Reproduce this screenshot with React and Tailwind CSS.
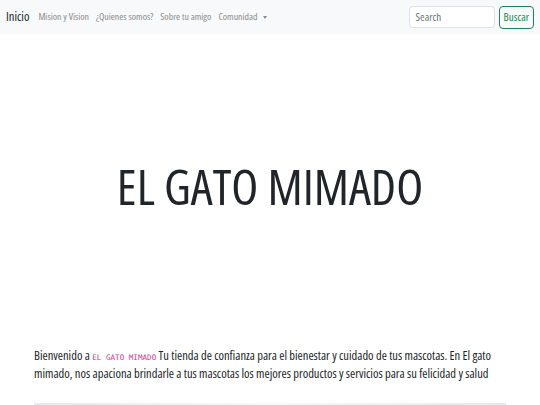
import React from 'react';

export default function App() {
  const links = ['Mision y Vision', '¿Quienes somos?', 'Sobre tu amigo'];

  return (
    <div className="min-h-[405px] bg-white text-[#212529] overflow-hidden font-stretch-condensed" style={{ fontFamily: '"Open Sans", "DejaVu Sans", sans-serif' }}>
      {/* Navbar */}
      <nav className="h-[34px] bg-[#f8f9fa] flex items-center pl-[6px] pr-[6px]">
        <span className="text-[12.5px] text-[#212529] mr-[9px]">Inicio</span>
        <div className="flex items-center gap-[7px] text-[9.8px] text-[#8a8b8c]">
          {links.map((l) => (
            <span key={l}>{l}</span>
          ))}
          <span className="flex items-center gap-[5px]">
            Comunidad
            <span className="inline-block w-0 h-0 border-l-[2.5px] border-r-[2.5px] border-t-[3px] border-l-transparent border-r-transparent border-t-[#8a8b8c]" />
          </span>
        </div>
        <div className="ml-auto flex items-center gap-[4px]">
          <div className="w-[86px] h-[22px] bg-white border border-[#dee2e6] rounded-[4px] flex items-center px-[6px] text-[11px] text-[#6c757d]">
            Search
          </div>
          <div className="h-[23px] px-[4px] border border-[#198754] rounded-[4px] flex items-center text-[11px] text-[#198754]">
            Buscar
          </div>
        </div>
      </nav>

      {/* Hero */}
      <section className="h-[306px] flex items-center justify-center">
        <h1 className="text-[49.5px] leading-none font-normal text-[#212529]">EL GATO MIMADO</h1>
      </section>

      {/* Intro */}
      <div className="px-[34px] pt-[8px]">
        <p className="text-[12.5px] leading-[16px] text-[#212529]">
          Bienvenido a{' '}
          <code className="text-[7.6px] text-[#d63384] font-stretch-normal" style={{ fontFamily: '"DejaVu Sans Mono", monospace' }}>EL GATO MIMADO</code>{' '}
          Tu tienda de confianza para el bienestar y cuidado de tus mascotas. En El gato mimado, nos apaciona brindarle a tus mascotas los mejores productos y servicios para su felicidad y salud
        </p>
        <div className="mt-[21px] h-[6px] bg-gradient-to-r from-[#e9e9eb] via-[#f8f8f8] to-[#e9e9eb]" />
      </div>
    </div>
  );
}
